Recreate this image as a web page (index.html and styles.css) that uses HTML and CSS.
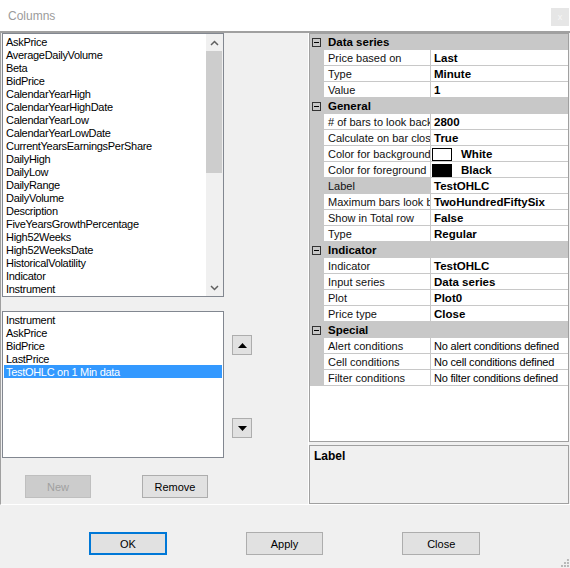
FILE: index.html
```html
<!DOCTYPE html>
<html lang="en">
<head>
    <meta charset="UTF-8">
    <title>Columns</title>
    <link rel="stylesheet" href="styles.css">
</head>
<body>
<div class="dialog">
    <div class="titlebar">
        <span class="title">Columns</span>
        <span class="close-box">x</span>
    </div>

    <div class="main">
        <div class="left-pane">
            <div class="listbox all-columns">
                <ul class="items">
                    <li>AskPrice</li>
                    <li>AverageDailyVolume</li>
                    <li>Beta</li>
                    <li>BidPrice</li>
                    <li>CalendarYearHigh</li>
                    <li>CalendarYearHighDate</li>
                    <li>CalendarYearLow</li>
                    <li>CalendarYearLowDate</li>
                    <li>CurrentYearsEarningsPerShare</li>
                    <li>DailyHigh</li>
                    <li>DailyLow</li>
                    <li>DailyRange</li>
                    <li>DailyVolume</li>
                    <li>Description</li>
                    <li>FiveYearsGrowthPercentage</li>
                    <li>High52Weeks</li>
                    <li>High52WeeksDate</li>
                    <li>HistoricalVolatility</li>
                    <li>Indicator</li>
                    <li>Instrument</li>
                </ul>
                <div class="vscroll">
                    <div class="arrow">
                        <svg width="9" height="6" viewBox="0 0 9 6"><polyline points="1,5 4.5,1.5 8,5" fill="none" stroke="#606060" stroke-width="1.5"/></svg>
                    </div>
                    <div class="track"><div class="thumb"></div></div>
                    <div class="arrow">
                        <svg width="9" height="6" viewBox="0 0 9 6"><polyline points="1,1 4.5,4.5 8,1" fill="none" stroke="#606060" stroke-width="1.5"/></svg>
                    </div>
                </div>
            </div>

            <div class="chosen-row">
                <div class="listbox chosen-columns">
                    <ul class="items">
                        <li>Instrument</li>
                        <li>AskPrice</li>
                        <li>BidPrice</li>
                        <li>LastPrice</li>
                        <li class="selected">TestOHLC on 1 Min data</li>
                    </ul>
                </div>
                <div class="movers">
                    <button class="move-btn">
                        <svg width="9" height="5" viewBox="0 0 9 5"><polygon points="0,5 4.5,0 9,5" fill="#000"/></svg>
                    </button>
                    <button class="move-btn">
                        <svg width="9" height="5" viewBox="0 0 9 5"><polygon points="0,0 9,0 4.5,5" fill="#000"/></svg>
                    </button>
                </div>
            </div>

            <div class="list-actions">
                <button class="btn" disabled>New</button>
                <button class="btn">Remove</button>
            </div>
        </div>

        <div class="right-pane">
            <div class="propgrid">
                <div class="pg-cat"><span class="pg-margin"><span class="toggle"></span></span><span class="pg-cat-name">Data series</span></div>
                <div class="pg-row"><span class="pg-margin"></span><span class="pg-name">Price based on</span><span class="pg-value">Last</span></div>
                <div class="pg-row"><span class="pg-margin"></span><span class="pg-name">Type</span><span class="pg-value">Minute</span></div>
                <div class="pg-row"><span class="pg-margin"></span><span class="pg-name">Value</span><span class="pg-value">1</span></div>

                <div class="pg-cat"><span class="pg-margin"><span class="toggle"></span></span><span class="pg-cat-name">General</span></div>
                <div class="pg-row"><span class="pg-margin"></span><span class="pg-name"># of bars to look back</span><span class="pg-value">2800</span></div>
                <div class="pg-row"><span class="pg-margin"></span><span class="pg-name">Calculate on bar close</span><span class="pg-value">True</span></div>
                <div class="pg-row"><span class="pg-margin"></span><span class="pg-name">Color for background</span><span class="pg-value"><span class="swatch"></span>White</span></div>
                <div class="pg-row"><span class="pg-margin"></span><span class="pg-name">Color for foreground</span><span class="pg-value"><span class="swatch black"></span>Black</span></div>
                <div class="pg-row active"><span class="pg-margin"></span><span class="pg-name">Label</span><span class="pg-value">TestOHLC</span></div>
                <div class="pg-row"><span class="pg-margin"></span><span class="pg-name">Maximum bars look back</span><span class="pg-value">TwoHundredFiftySix</span></div>
                <div class="pg-row"><span class="pg-margin"></span><span class="pg-name">Show in Total row</span><span class="pg-value">False</span></div>
                <div class="pg-row"><span class="pg-margin"></span><span class="pg-name">Type</span><span class="pg-value">Regular</span></div>

                <div class="pg-cat"><span class="pg-margin"><span class="toggle"></span></span><span class="pg-cat-name">Indicator</span></div>
                <div class="pg-row"><span class="pg-margin"></span><span class="pg-name">Indicator</span><span class="pg-value">TestOHLC</span></div>
                <div class="pg-row"><span class="pg-margin"></span><span class="pg-name">Input series</span><span class="pg-value">Data series</span></div>
                <div class="pg-row"><span class="pg-margin"></span><span class="pg-name">Plot</span><span class="pg-value">Plot0</span></div>
                <div class="pg-row"><span class="pg-margin"></span><span class="pg-name">Price type</span><span class="pg-value">Close</span></div>

                <div class="pg-cat"><span class="pg-margin"><span class="toggle"></span></span><span class="pg-cat-name">Special</span></div>
                <div class="pg-row"><span class="pg-margin"></span><span class="pg-name">Alert conditions</span><span class="pg-value plain">No alert conditions defined</span></div>
                <div class="pg-row"><span class="pg-margin"></span><span class="pg-name">Cell conditions</span><span class="pg-value plain">No cell conditions defined</span></div>
                <div class="pg-row"><span class="pg-margin"></span><span class="pg-name">Filter conditions</span><span class="pg-value plain">No filter conditions defined</span></div>
            </div>
            <div class="help-box">Label</div>
        </div>
    </div>

    <div class="footer">
        <button class="btn wide default">OK</button>
        <button class="btn wide">Apply</button>
        <button class="btn wide">Close</button>
        <svg class="grip" width="10" height="10" viewBox="0 0 10 10">
            <rect x="8" y="2" width="2" height="2" fill="#b8b8b8"/>
            <rect x="5" y="5" width="2" height="2" fill="#b8b8b8"/>
            <rect x="8" y="5" width="2" height="2" fill="#b8b8b8"/>
            <rect x="2" y="8" width="2" height="2" fill="#b8b8b8"/>
            <rect x="5" y="8" width="2" height="2" fill="#b8b8b8"/>
            <rect x="8" y="8" width="2" height="2" fill="#b8b8b8"/>
        </svg>
    </div>
</div>
</body>
</html>
```

FILE: styles.css
```css
body {
    margin: 0;
    background: #f0f0f0;
    font-family: "Liberation Sans", Arial, sans-serif;
    font-size: 11px;
    color: #000;
}

.dialog {
    width: 570px;
    height: 568px;
    display: flex;
    flex-direction: column;
    overflow: hidden;
}

/* title bar */
.titlebar {
    height: 31px;
    flex: none;
    background: #fff;
    display: flex;
    align-items: center;
    justify-content: space-between;
    padding: 0 1px 0 8px;
    box-sizing: border-box;
}

.title {
    color: #9b9b9b;
    font-size: 12px;
}

.close-box {
    width: 18px;
    height: 18px;
    margin-top: 3px;
    background: #e6e6e6;
    color: #f6f6f6;
    font-size: 9px;
    display: flex;
    align-items: center;
    justify-content: center;
}

/* main split area */
.main {
    height: 474px;
    flex: none;
    display: flex;
    box-sizing: border-box;
    border-top: 2px solid #a0a0a0;
    border-left: 1px solid #a0a0a0;
    border-bottom: 1px solid #fff;
}

.left-pane {
    width: 308px;
    flex: none;
    box-sizing: border-box;
    padding-left: 1px;
    border-right: 1px solid #fff;
    display: flex;
    flex-direction: column;
}

.listbox {
    width: 222px;
    flex: none;
    box-sizing: border-box;
    background: #fff;
    border: 1px solid #828790;
}

.all-columns {
    height: 264px;
    display: flex;
}

.items {
    list-style: none;
    margin: 0;
    padding: 2px 1px;
    flex: 1;
    overflow: hidden;
}

.items li {
    height: 13px;
    line-height: 13px;
    padding-left: 2px;
    white-space: nowrap;
    letter-spacing: -0.3px;
}

.items li.selected {
    background: #3399ff;
    color: #fff;
}

.chosen-columns .items {
    padding-top: 1px;
}

.chosen-columns .items li {
    line-height: 14px;
}

.vscroll {
    width: 17px;
    flex: none;
    background: #f0f0f0;
    display: flex;
    flex-direction: column;
}

.arrow {
    height: 17px;
    display: flex;
    align-items: center;
    justify-content: center;
}

.track {
    flex: 1;
}

.thumb {
    height: 122px;
    margin: 0 1px 0 0;
    background: #cdcdcd;
}

.chosen-row {
    display: flex;
    margin-top: 14px;
}

.chosen-columns {
    height: 147px;
}

.movers {
    display: flex;
    flex-direction: column;
    padding: 24px 0 0 8px;
    gap: 63px;
}

.move-btn {
    width: 20px;
    height: 20px;
    padding: 0;
    background: #e1e1e1;
    border: 1px solid #adadad;
    display: flex;
    align-items: center;
    justify-content: center;
}

.list-actions {
    display: flex;
    gap: 51px;
    margin: 17px 0 0 23px;
}

.btn {
    width: 66px;
    height: 23px;
    padding: 0;
    background: #e1e1e1;
    border: 1px solid #adadad;
    color: #000;
    font-family: "Liberation Sans", Arial, sans-serif;
    font-size: 11px;
}

.btn:disabled {
    background: #cccccc;
    border-color: #bfbfbf;
    color: #a0a0a0;
}

/* property grid */
.right-pane {
    width: 261px;
    flex: none;
    box-sizing: border-box;
    padding-right: 1px;
    display: flex;
    flex-direction: column;
}

.propgrid {
    height: 409px;
    box-sizing: border-box;
    background: #fff;
    border: 1px solid #a0a0a0;
}

.pg-row,
.pg-cat {
    display: flex;
    height: 16px;
    line-height: 17px;
    box-sizing: border-box;
    border-bottom: 1px solid #c8c8c8;
}

.pg-cat {
    background: #c8c8c8;
    font-weight: bold;
    font-size: 11.5px;
}

.pg-margin {
    width: 14px;
    flex: none;
    background: #c8c8c8;
}

.toggle {
    width: 9px;
    height: 9px;
    margin: 4px 0 0 2px;
    box-sizing: border-box;
    border: 1px solid #333;
    display: flex;
    align-items: center;
    justify-content: center;
}

.toggle::after {
    content: "";
    width: 5px;
    height: 1px;
    background: #000;
}

.pg-cat-name {
    padding-left: 4px;
}

.pg-name {
    width: 107px;
    flex: none;
    box-sizing: border-box;
    padding-left: 4px;
    border-right: 1px solid #c8c8c8;
    white-space: nowrap;
    overflow: hidden;
    color: #111;
}

.pg-row.active .pg-name {
    background: #c8c8c8;
}

.pg-value {
    flex: 1;
    display: flex;
    align-items: flex-start;
    padding-left: 3px;
    font-weight: bold;
    font-size: 11.5px;
    white-space: nowrap;
    overflow: hidden;
}

.pg-value.plain {
    font-weight: normal;
    font-size: 11px;
    letter-spacing: -0.2px;
}

.swatch {
    width: 20px;
    height: 13px;
    flex: none;
    margin: 2px 9px 0 -2px;
    box-sizing: border-box;
    border: 1px solid #000;
    background: #fff;
}

.swatch.black {
    background: #000;
}

.help-box {
    height: 59px;
    margin-top: 3px;
    box-sizing: border-box;
    padding: 3px 4px;
    border: 1px solid #a0a0a0;
    font-weight: bold;
    font-size: 12px;
}

/* dialog buttons */
.footer {
    flex: 1;
    display: flex;
    align-items: flex-start;
    gap: 79px;
    padding: 27px 0 0 89px;
}

.btn.wide {
    width: 78px;
    height: 23px;
}

.btn.default {
    border: 2px solid #0078d7;
}

.grip {
    margin-left: auto;
    align-self: flex-end;
    margin-bottom: 1px;
    margin-right: 1px;
}
```
